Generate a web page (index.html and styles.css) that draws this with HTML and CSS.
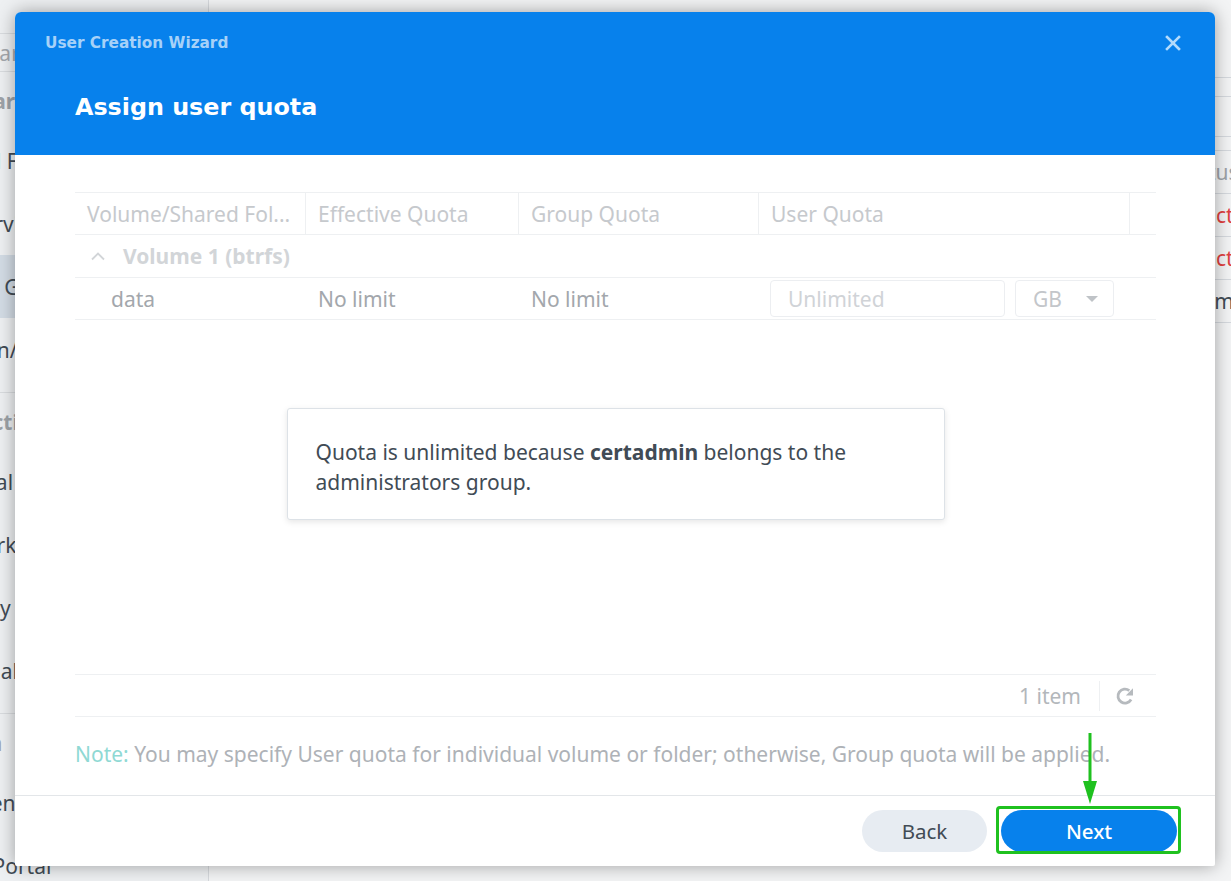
FILE: index.html
```html
<!DOCTYPE html>
<html lang="en">
<head>
    <meta charset="UTF-8">
    <meta name="viewport" content="width=device-width, initial-scale=1.0">
    <title>Control Panel - User Creation Wizard</title>
    <link rel="stylesheet" href="styles.css">
</head>
<body>
    <!-- Control Panel window behind the wizard -->
    <div class="app">
        <aside class="sidebar">
            <div class="side-search">Search</div>

            <div class="side-group">
                <div class="side-title">File Sharing</div>
                <div class="side-item">Shared Folder</div>
                <div class="side-item">File Services</div>
                <div class="side-item active">User &amp; Group</div>
                <div class="side-item">Domain/LDAP</div>
            </div>

            <div class="side-group">
                <div class="side-title">Connectivity</div>
                <div class="side-item">External Access</div>
                <div class="side-item">Network</div>
                <div class="side-item">Security</div>
                <div class="side-item">Terminal &amp; SNMP</div>
            </div>

            <div class="side-group">
                <div class="side-title">System</div>
                <div class="side-item">Info Center</div>
                <div class="side-item">Login Portal</div>
            </div>
        </aside>

        <main class="main">
            <div class="tabs"></div>
            <div class="subbar"></div>
            <div class="toolbar"></div>
            <div class="list">
                <div class="list-row list-head"><span>Name</span><span>Description</span><span>Email</span><span>Status</span></div>
                <div class="list-row"><span>admin</span><span>System default user</span><span></span><span class="off">Deactivated</span></div>
                <div class="list-row"><span>guest</span><span>Guest</span><span></span><span class="off">Deactivated</span></div>
                <div class="list-row"><span>shovon</span><span></span><span></span><span>Normal</span></div>
            </div>
        </main>
    </div>

    <!-- Wizard dialog -->
    <div class="modal">
        <div class="modal-head">
            <div class="head-top">
                <span class="wiz-name">User Creation Wizard</span>
                <button class="close-btn" aria-label="Close">
                    <svg width="16" height="16" viewBox="0 0 16 16">
                        <path d="M2 2 L14 14 M14 2 L2 14" stroke="currentColor" stroke-width="2.6" stroke-linecap="square"/>
                    </svg>
                </button>
            </div>
            <h1>Assign user quota</h1>
        </div>

        <div class="modal-body">
            <div class="grid">
                <div class="grid-row grid-head">
                    <div class="cell">Volume/Shared Fol...</div>
                    <div class="cell">Effective Quota</div>
                    <div class="cell">Group Quota</div>
                    <div class="cell">User Quota</div>
                    <div class="cell"></div>
                </div>

                <div class="group-row">
                    <svg class="caret-up" width="16" height="10" viewBox="0 0 16 10">
                        <path d="M2 8.5 L8 2.5 L14 8.5" fill="none" stroke="currentColor" stroke-width="1.8"/>
                    </svg>
                    <span>Volume 1 (btrfs)</span>
                </div>

                <div class="grid-row data-row">
                    <div class="cell name-cell">data</div>
                    <div class="cell">No limit</div>
                    <div class="cell">No limit</div>
                    <div class="cell quota-cell">
                        <input class="quota-input" type="text" placeholder="Unlimited" disabled>
                        <div class="unit-select">
                            <span>GB</span>
                            <svg width="12" height="6" viewBox="0 0 12 6"><path d="M0 0 H12 L6 6 Z" fill="currentColor"/></svg>
                        </div>
                    </div>
                    <div class="cell"></div>
                </div>

                <div class="grid-empty">
                    <p class="mask-msg">Quota is unlimited because <b>certadmin</b> belongs to the administrators group.</p>
                </div>

                <div class="grid-foot">
                    <span class="count">1 item</span>
                    <span class="foot-sep"></span>
                    <svg class="refresh" width="20" height="20" viewBox="0 0 20 20">
                        <path d="M16.1 13.5 A7 7 0 1 1 14.3 4.6" fill="none" stroke="currentColor" stroke-width="2.8"/>
                        <path d="M18 2.2 L18 9.6 L10.8 9.6 Z" fill="currentColor"/>
                    </svg>
                </div>
            </div>

            <p class="note"><span class="note-label">Note:</span> You may specify User quota for individual volume or folder; otherwise, Group quota will be applied.</p>
        </div>

        <div class="modal-foot">
            <button class="btn btn-back">Back</button>
            <button class="btn btn-next">Next</button>
        </div>

        <!-- green call-out pointing at Next -->
        <div class="callout-box"></div>
        <svg class="callout-arrow" width="16" height="72" viewBox="0 0 16 72">
            <path d="M8 0 V52" stroke="#1fc11f" stroke-width="3"/>
            <path d="M1 48 L15 48 L8 71 Z" fill="#1fc11f"/>
        </svg>
    </div>
</body>
</html>
```

FILE: styles.css
```css
* {
    box-sizing: border-box;
}

body {
    margin: 0;
    width: 1231px;
    height: 881px;
    overflow: hidden;
    font-family: "Noto Sans", "Open Sans", sans-serif;
    background-color: #e9eaec;
    position: relative;
}

/* Background control panel (window starts left of the screen) */
.app {
    display: flex;
    height: 100%;
    margin-left: -100px;
    overflow: hidden;
}

.sidebar {
    width: 309px;
    flex-shrink: 0;
    background: #eef0f2;
    border-right: 1px solid #d6d9dd;
    color: #414b55;
    font-size: 21px;
    padding-top: 33px;
    white-space: nowrap;
}

.side-search {
    height: 39px;
    border-top: 1px solid #d9dcdf;
    border-bottom: 1px solid #d9dcdf;
    color: #a4a8ad;
    display: flex;
    align-items: center;
    padding-left: 76px;
}

.side-group {
    padding-bottom: 11px;
    border-bottom: 1px solid #d9dcdf;
}

.side-title {
    height: 57px;
    display: flex;
    align-items: center;
    padding-left: 26px;
    font-weight: bold;
    color: #9ea3a8;
}

.side-item {
    height: 63px;
    display: flex;
    align-items: center;
    padding-left: 32px;
}

.side-item.active {
    background: #d3dce5;
}

.main {
    flex: 1;
    background: #f3f4f5;
}

.tabs {
    height: 78px;
    border-bottom: 1px solid #d5d9de;
}

.subbar {
    height: 19px;
    border-bottom: 1px solid #d5d9de;
}

.toolbar {
    height: 40px;
    border-bottom: 1px solid #d5d9de;
}

.list {
    margin-top: 13px;
    border-top: 1px solid #d5d9de;
}

.list-row {
    display: grid;
    grid-template-columns: 300px 340px 316px 1fr;
    height: 43px;
    align-items: center;
    border-bottom: 1px solid #d5d9de;
    font-size: 21px;
    color: #414b55;
}

.list-row span {
    padding-left: 12px;
    white-space: nowrap;
}

.list-head {
    color: #9ea3a8;
}

.off {
    color: #e0403f;
}

/* Wizard dialog */
.modal {
    position: absolute;
    left: 15px;
    top: 12px;
    width: 1200px;
    height: 854px;
    background: #fff;
    border-radius: 6px 6px 2px 2px;
    box-shadow: 0 0 18px rgba(0, 0, 0, 0.35);
    display: flex;
    flex-direction: column;
}

.modal-head {
    height: 143px;
    background: #0781ec;
    border-radius: 6px 6px 0 0;
    padding: 21px 34px 0 30px;
    flex-shrink: 0;
}

.head-top {
    display: flex;
    justify-content: space-between;
    align-items: center;
    height: 20px;
}

.wiz-name {
    font-family: "DejaVu Sans", sans-serif;
    font-weight: bold;
    font-size: 15.3px;
    color: #a6d1f8;
}

.close-btn {
    background: none;
    border: none;
    padding: 0;
    width: 16px;
    height: 16px;
    color: #b3dbfc;
}

.modal-head h1 {
    margin: 38px 0 0 30px;
    font-family: "DejaVu Sans", sans-serif;
    font-size: 23.8px;
    line-height: 32px;
    font-weight: bold;
    color: #fff;
}

.modal-body {
    flex: 1;
    padding: 37px 59px 0 60px;
}

/* Quota grid */
.grid {
    display: flex;
    flex-direction: column;
}

.grid-row {
    display: grid;
    grid-template-columns: 231px 213px 240px 371px 1fr;
    align-items: center;
    border-bottom: 1px solid #eef0f2;
}

.cell {
    padding-left: 12px;
    font-size: 21px;
    white-space: nowrap;
    overflow: hidden;
}

.grid-head {
    height: 43px;
    border-top: 1px solid #eef0f2;
    color: #c6c9cd;
    align-items: stretch;
}

.grid-head .cell {
    display: flex;
    align-items: center;
    border-right: 1px solid #eef0f2;
}

.grid-head .cell:last-child {
    border-right: none;
}

.group-row {
    height: 43px;
    display: flex;
    align-items: center;
    gap: 17px;
    padding-left: 15px;
    border-bottom: 1px solid #eef0f2;
    font-size: 21px;
    font-weight: bold;
    color: #d2d5d8;
}

.caret-up {
    color: #d2d5d8;
}

.data-row {
    height: 42px;
    color: #a3a7ac;
}

.name-cell {
    padding-left: 36px;
}

.quota-cell {
    display: flex;
    gap: 10px;
    padding-left: 11px;
}

.quota-input {
    width: 235px;
    height: 37px;
    border: 1px solid #eceef1;
    border-radius: 4px;
    background: #fff;
    padding: 0 0 0 17px;
    font-family: inherit;
    font-size: 21px;
}

.quota-input::placeholder {
    color: #d0d3d7;
}

.unit-select {
    width: 99px;
    height: 37px;
    border: 1px solid #eceef1;
    border-radius: 4px;
    display: flex;
    align-items: center;
    justify-content: space-between;
    padding: 0 15px 0 17px;
    color: #c3c6ca;
}

.unit-select svg {
    color: #bfc3c7;
}

.grid-empty {
    height: 354px;
    display: flex;
    justify-content: center;
    padding-top: 88px;
}

.mask-msg {
    margin: 0;
    width: 658px;
    height: 112px;
    padding: 28px 28px 0 28px;
    border: 1px solid #dde2e7;
    border-radius: 3px;
    background: #fff;
    box-shadow: 0 2px 6px rgba(0, 0, 0, 0.1);
    font-size: 21px;
    line-height: 30px;
    color: #414b55;
}

.grid-foot {
    height: 43px;
    border-top: 1px solid #eef0f2;
    border-bottom: 1px solid #eef0f2;
    display: flex;
    justify-content: flex-end;
    align-items: center;
    padding-right: 21px;
    color: #b3b7bb;
    font-size: 21px;
}

.foot-sep {
    width: 1px;
    height: 30px;
    background: #eef0f2;
    margin: 0 15px 0 18px;
}

.refresh {
    color: #b6babe;
}

.note {
    margin: 24px 0 0;
    font-size: 21px;
    line-height: 26px;
    color: #aeb2b7;
    white-space: nowrap;
}

.note-label {
    color: #8fd9d4;
}

/* Dialog buttons */
.modal-foot {
    height: 71px;
    flex-shrink: 0;
    border-top: 1px solid #e3e6e9;
    display: flex;
    justify-content: flex-end;
    align-items: flex-start;
    gap: 14px;
    padding: 14px 38px 0 0;
}

.btn {
    height: 42px;
    border: none;
    border-radius: 21px;
    font-family: inherit;
    font-size: 20.5px;
    cursor: pointer;
}

.btn-back {
    width: 125px;
    background: #e7ecf2;
    color: #414b55;
}

.btn-next {
    width: 176px;
    background: #0781ec;
    color: #fff;
    font-weight: 500;
}

.callout-box {
    position: absolute;
    left: 981px;
    top: 794px;
    width: 185px;
    height: 48px;
    border: 3px solid #1fc11f;
    border-radius: 4px;
}

.callout-arrow {
    position: absolute;
    left: 1067px;
    top: 721px;
}
```
